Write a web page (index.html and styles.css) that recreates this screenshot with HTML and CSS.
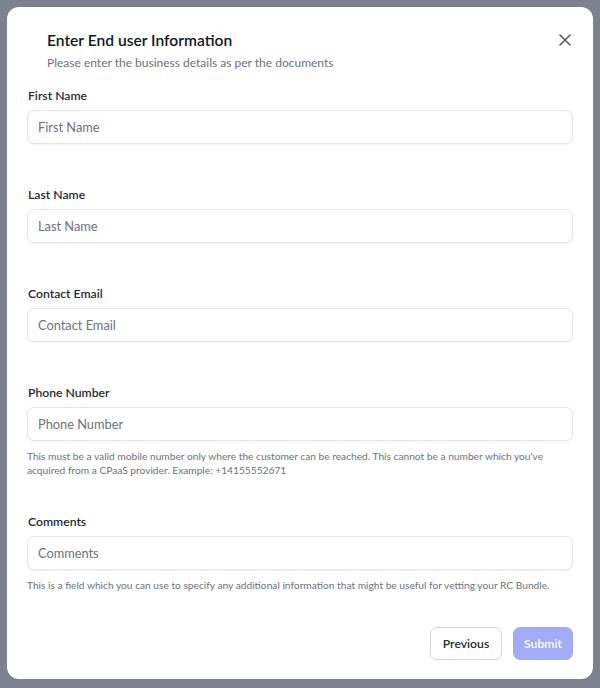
FILE: index.html
```html
<!DOCTYPE html>
<html lang="en">
<head>
<meta charset="utf-8">
<title>Enter End user Information</title>
<link rel="stylesheet" href="styles.css">
</head>
<body>
<div class="backdrop">
  <div class="modal">
    <div class="header">
      <div class="header-text">
        <h2 class="title">Enter End user Information</h2>
        <p class="subtitle">Please enter the business details as per the documents</p>
      </div>
      <button class="close" aria-label="Close">
        <svg width="12" height="12" viewBox="0 0 12 12"><path d="M1 1L11 11M11 1L1 11" stroke="#4b5563" stroke-width="1.5" stroke-linecap="round"/></svg>
      </button>
    </div>
    <form class="form">
      <div class="field">
        <label class="label">First Name</label>
        <input class="input" placeholder="First Name">
      </div>
      <div class="field">
        <label class="label">Last Name</label>
        <input class="input" placeholder="Last Name">
      </div>
      <div class="field">
        <label class="label">Contact Email</label>
        <input class="input" placeholder="Contact Email">
      </div>
      <div class="field field-help">
        <label class="label">Phone Number</label>
        <input class="input" placeholder="Phone Number">
        <p class="help">This must be a valid mobile number only where the customer can be reached. This cannot be a number which you've acquired from a CPaaS provider. Example: +14155552671</p>
      </div>
      <div class="field field-help">
        <label class="label">Comments</label>
        <input class="input" placeholder="Comments">
        <p class="help">This is a field which you can use to specify any additional information that might be useful for vetting your RC Bundle.</p>
      </div>
      <div class="actions">
        <button type="button" class="btn btn-secondary">Previous</button>
        <button type="button" class="btn btn-primary">Submit</button>
      </div>
    </form>
  </div>
</div>
</body>
</html>
```
FILE: styles.css
```css
* { box-sizing: border-box; }
html, body { margin: 0; padding: 0; }
body {
  background: #7e828e;
  font-family: Lato, "Noto Sans", "Liberation Sans", sans-serif;
  width: 600px;
  height: 688px;
  overflow: hidden;
}
.backdrop {
  padding: 7px;
}
.modal {
  background: #ffffff;
  border-radius: 12px;
  padding: 21px 20px 20px 20px;
  height: 672px;
}
.header {
  display: flex;
  justify-content: space-between;
  align-items: flex-start;
  padding-left: 20px;
}
.title {
  margin: 0;
  font-size: 15.6px;
  line-height: 24px;
  font-weight: 600;
  color: #111827;
}
.subtitle {
  margin: 1px 0 0 0;
  font-size: 12px;
  line-height: 20px;
  color: #6b7280;
}
.close {
  border: 0;
  background: none;
  padding: 0;
  margin: 6px 2px 0 0;
  width: 12px;
  height: 12px;
  display: flex;
  cursor: pointer;
}
.form {
  margin-top: 13px;
  display: flex;
  flex-direction: column;
}
.field {
  display: flex;
  flex-direction: column;
  margin-bottom: 41px;
}
.field-help {
  margin-bottom: 35px;
}
.label {
  font-size: 12.2px;
  line-height: 20px;
  font-weight: 600;
  color: #1f2937;
  padding-left: 1px;
}
.input {
  margin-top: 4px;
  height: 34px;
  border: 1px solid #e3e5e9;
  border-radius: 7px;
  padding: 0 10px;
  font-family: inherit;
  font-size: 12.8px;
  color: #111827;
  box-shadow: 0 1px 2px rgba(0, 0, 0, 0.05);
  outline: none;
}
.input::placeholder {
  color: #6b7280;
}
.help {
  margin: 8px 0 0 0;
  font-size: 10.2px;
  line-height: 14px;
  color: #6b7280;
}
.actions {
  display: flex;
  justify-content: flex-end;
  gap: 11px;
}
.btn {
  height: 33px;
  border-radius: 7px;
  font-family: inherit;
  font-size: 12.2px;
  font-weight: 600;
  padding: 0;
  cursor: pointer;
}
.btn-secondary {
  background: #ffffff;
  border: 1px solid #d4d7dd;
  color: #1f2937;
  width: 72px;
}
.btn-primary {
  background: #a2acf6;
  border: 1px solid #a2acf6;
  color: #ffffff;
  width: 60px;
}
```
